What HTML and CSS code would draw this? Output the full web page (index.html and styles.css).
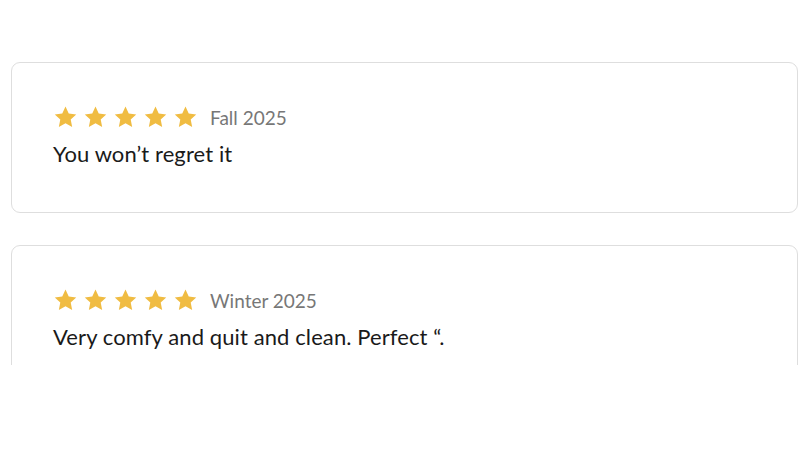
FILE: index.html
```html
<!DOCTYPE html>
<html>
<head>
<meta charset="utf-8">
<link rel="stylesheet" href="styles.css">
</head>
<body>
<div class="reviews">
  <div class="card">
    <div class="meta">
      <div class="stars">
        <svg viewBox="0 0 24 24"><path d="M12 1.5l3.1 6.6 7.2.9-5.3 5 1.4 7.1L12 17.6l-6.4 3.5L7 14l-5.3-5 7.2-.9z"/></svg>
        <svg viewBox="0 0 24 24"><path d="M12 1.5l3.1 6.6 7.2.9-5.3 5 1.4 7.1L12 17.6l-6.4 3.5L7 14l-5.3-5 7.2-.9z"/></svg>
        <svg viewBox="0 0 24 24"><path d="M12 1.5l3.1 6.6 7.2.9-5.3 5 1.4 7.1L12 17.6l-6.4 3.5L7 14l-5.3-5 7.2-.9z"/></svg>
        <svg viewBox="0 0 24 24"><path d="M12 1.5l3.1 6.6 7.2.9-5.3 5 1.4 7.1L12 17.6l-6.4 3.5L7 14l-5.3-5 7.2-.9z"/></svg>
        <svg viewBox="0 0 24 24"><path d="M12 1.5l3.1 6.6 7.2.9-5.3 5 1.4 7.1L12 17.6l-6.4 3.5L7 14l-5.3-5 7.2-.9z"/></svg>
      </div>
      <span class="season">Fall 2025</span>
    </div>
    <p class="text">You won’t regret it</p>
  </div>
  <div class="card">
    <div class="meta">
      <div class="stars">
        <svg viewBox="0 0 24 24"><path d="M12 1.5l3.1 6.6 7.2.9-5.3 5 1.4 7.1L12 17.6l-6.4 3.5L7 14l-5.3-5 7.2-.9z"/></svg>
        <svg viewBox="0 0 24 24"><path d="M12 1.5l3.1 6.6 7.2.9-5.3 5 1.4 7.1L12 17.6l-6.4 3.5L7 14l-5.3-5 7.2-.9z"/></svg>
        <svg viewBox="0 0 24 24"><path d="M12 1.5l3.1 6.6 7.2.9-5.3 5 1.4 7.1L12 17.6l-6.4 3.5L7 14l-5.3-5 7.2-.9z"/></svg>
        <svg viewBox="0 0 24 24"><path d="M12 1.5l3.1 6.6 7.2.9-5.3 5 1.4 7.1L12 17.6l-6.4 3.5L7 14l-5.3-5 7.2-.9z"/></svg>
        <svg viewBox="0 0 24 24"><path d="M12 1.5l3.1 6.6 7.2.9-5.3 5 1.4 7.1L12 17.6l-6.4 3.5L7 14l-5.3-5 7.2-.9z"/></svg>
      </div>
      <span class="season">Winter 2025</span>
    </div>
    <p class="text">Very comfy and quit and clean. Perfect “.</p>
  </div>
</div>
</body>
</html>
```
FILE: styles.css
```css
html, body {
  margin: 0;
  background: #ffffff;
}
body {
  font-family: Lato, "Open Sans", sans-serif;
}
.reviews {
  height: 365px;
  overflow: hidden;
  box-sizing: border-box;
  padding: 62px 0 0 11px;
  display: flex;
  flex-direction: column;
  gap: 32px;
}
.card {
  width: 787px;
  height: 151px;
  flex-shrink: 0;
  box-sizing: border-box;
  border: 1.5px solid #dedede;
  border-radius: 9px;
  padding: 42px 0 0 41px;
}
.meta {
  display: flex;
  align-items: center;
  gap: 12px;
}
.stars {
  display: flex;
  gap: 5px;
}
.stars svg {
  width: 25px;
  height: 25px;
  fill: #f0bc42;
}
.season {
  font-size: 19px;
  color: #777777;
}
.text {
  margin: 10px 0 0 0;
  font-size: 22px;
  letter-spacing: 0.1px;
  color: #1a1a1a;
}
```
